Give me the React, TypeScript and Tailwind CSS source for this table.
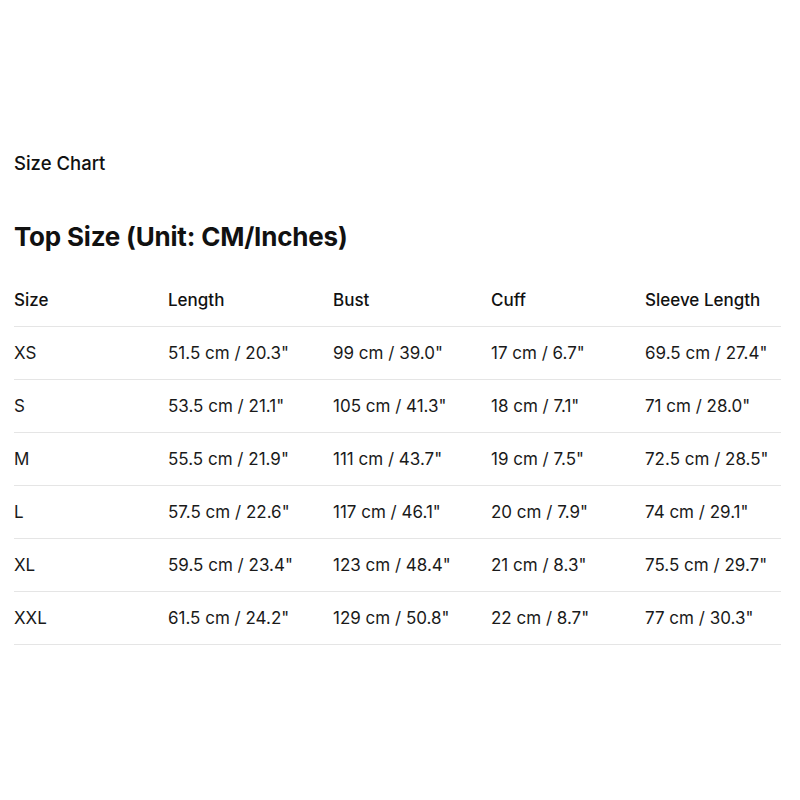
const rows = [
  ["XS", '51.5 cm / 20.3"', '99 cm / 39.0"', '17 cm / 6.7"', '69.5 cm / 27.4"'],
  ["S", '53.5 cm / 21.1"', '105 cm / 41.3"', '18 cm / 7.1"', '71 cm / 28.0"'],
  ["M", '55.5 cm / 21.9"', '111 cm / 43.7"', '19 cm / 7.5"', '72.5 cm / 28.5"'],
  ["L", '57.5 cm / 22.6"', '117 cm / 46.1"', '20 cm / 7.9"', '74 cm / 29.1"'],
  ["XL", '59.5 cm / 23.4"', '123 cm / 48.4"', '21 cm / 8.3"', '75.5 cm / 29.7"'],
  ["XXL", '61.5 cm / 24.2"', '129 cm / 50.8"', '22 cm / 8.7"', '77 cm / 30.3"'],
];

const headers = ["Size", "Length", "Bust", "Cuff", "Sleeve Length"];

export default function App() {
  return (
    <div className="w-[800px] h-[800px] bg-white text-[#111111] font-['Inter',sans-serif] pt-[152px] pl-[14px] pr-[19px]">
      <p className="text-[18.5px] leading-[22px] font-medium">Size Chart</p>
      <h2 className="mt-[48px] text-[26px] leading-[30px] font-bold tracking-[-0.2px]">
        Top Size (Unit: CM/Inches)
      </h2>
      <table className="mt-[22px] w-[767px] table-fixed border-collapse text-[17px]">
        <colgroup>
          <col className="w-[154px]" />
          <col className="w-[165px]" />
          <col className="w-[158px]" />
          <col className="w-[154px]" />
          <col />
        </colgroup>
        <thead>
          <tr className="border-b border-[#e5e5e5]">
            {headers.map((h) => (
              <th key={h} className="text-left font-medium py-4 leading-[20px]">
                {h}
              </th>
            ))}
          </tr>
        </thead>
        <tbody>
          {rows.map((r) => (
            <tr key={r[0]} className="border-b border-[#e5e5e5]">
              {r.map((c, i) => (
                <td key={i} className="py-4 leading-[20px] text-[#1a1a1a]">
                  {c}
                </td>
              ))}
            </tr>
          ))}
        </tbody>
      </table>
    </div>
  );
}
